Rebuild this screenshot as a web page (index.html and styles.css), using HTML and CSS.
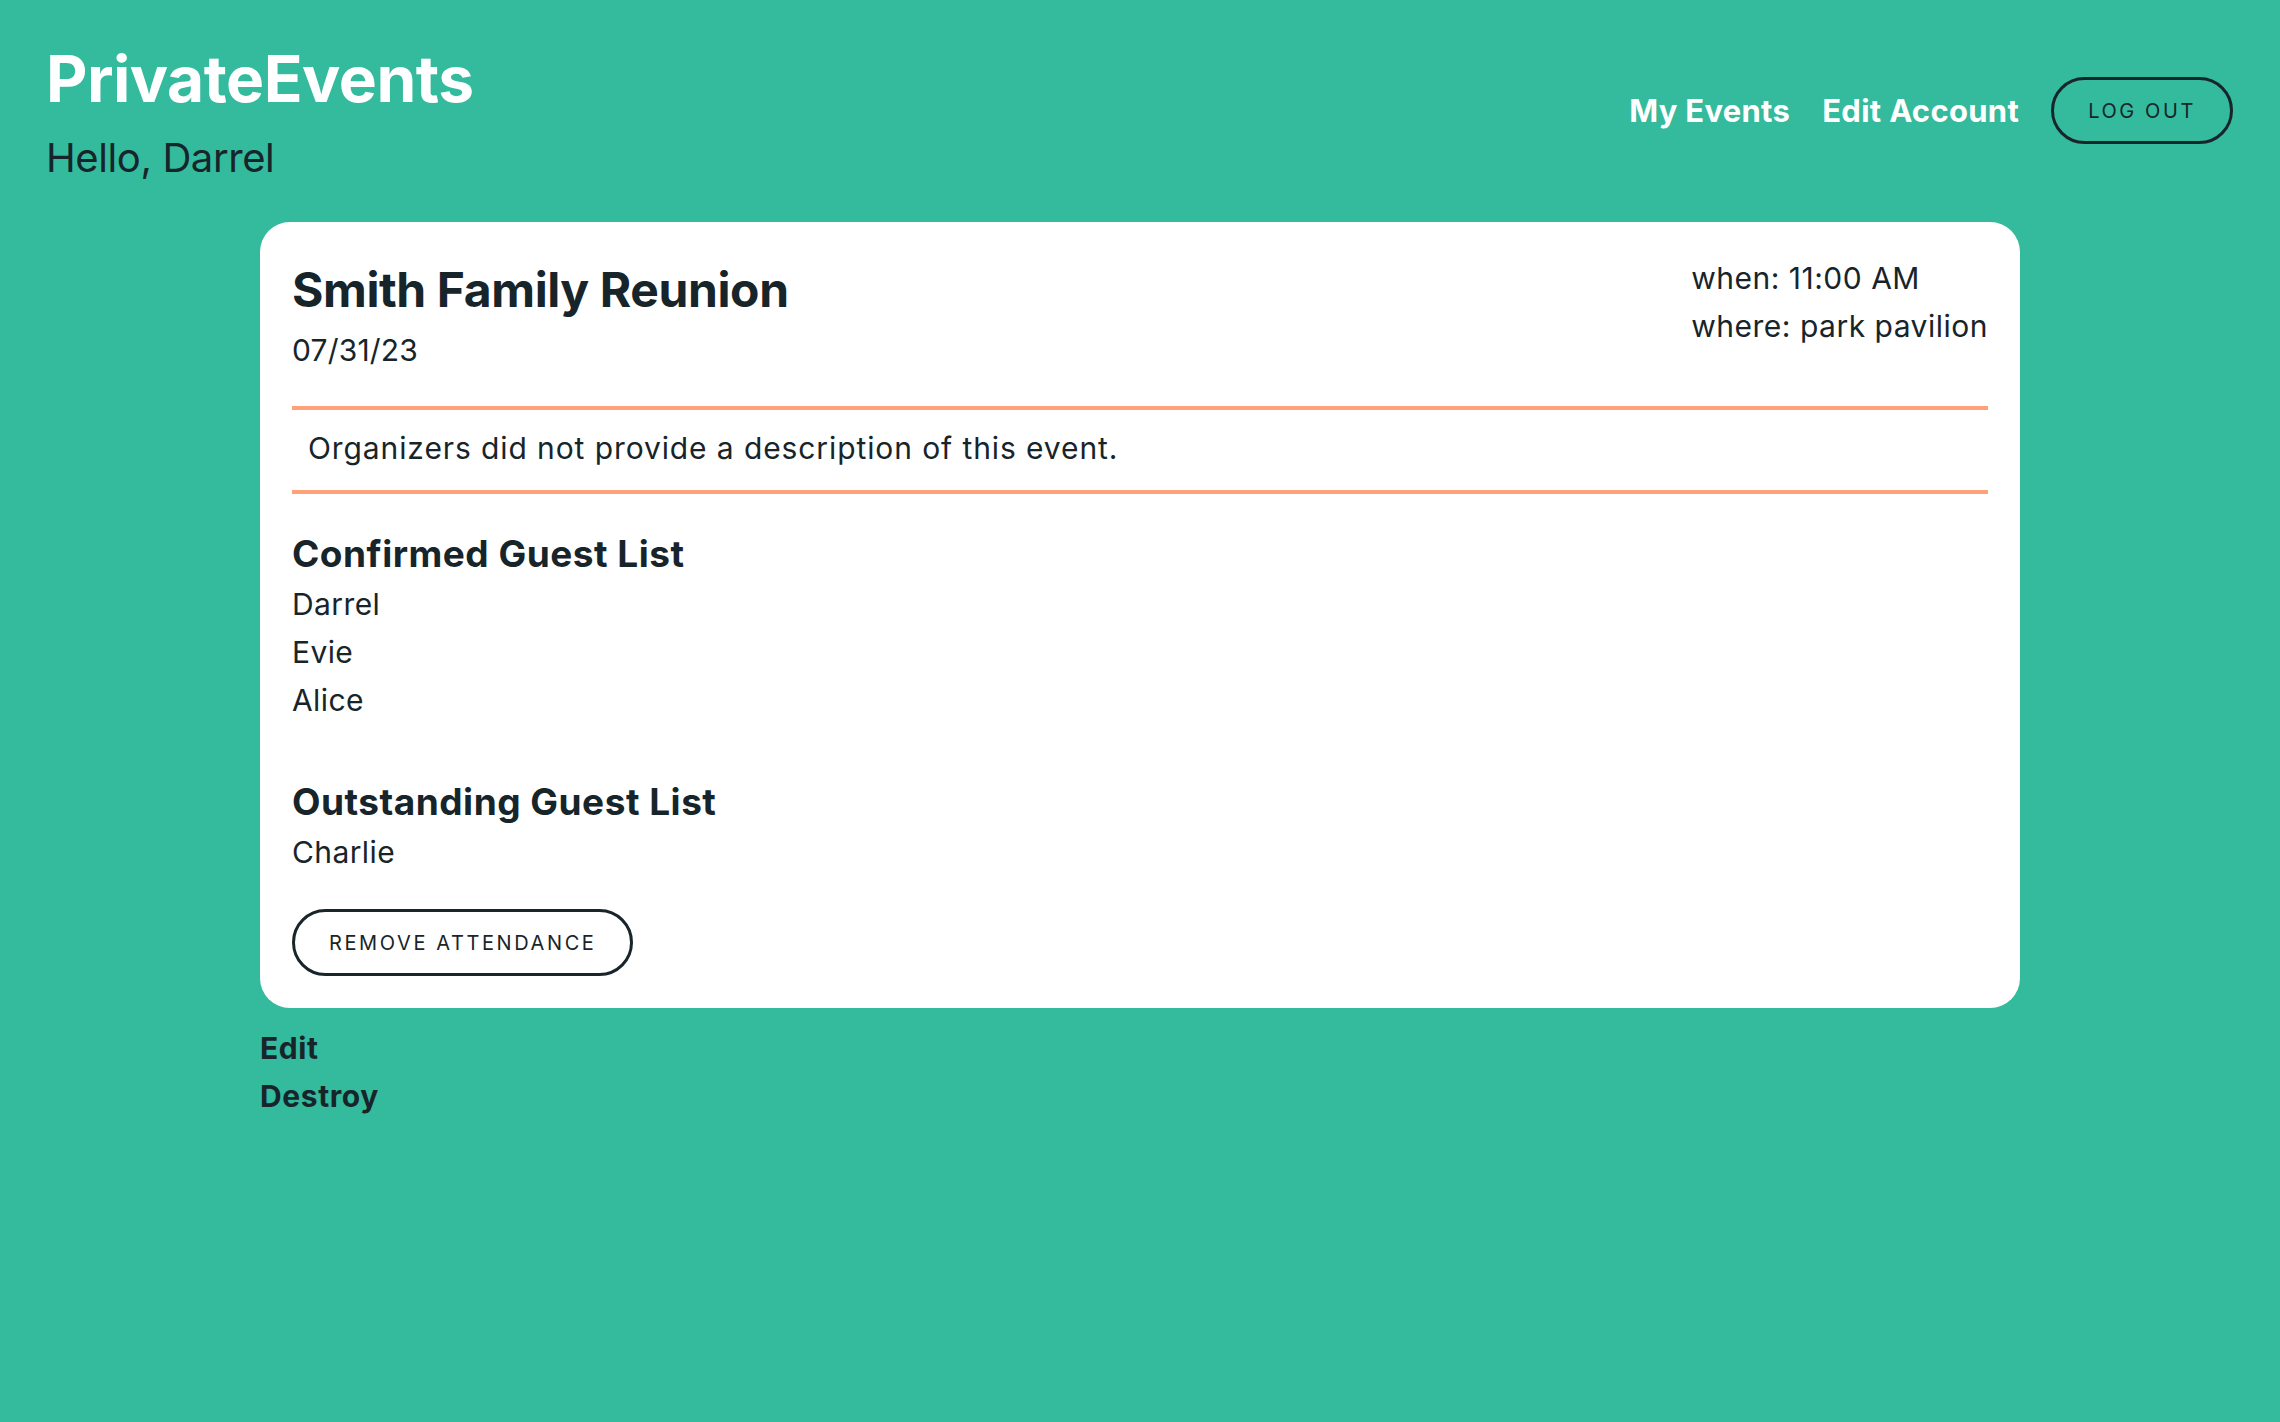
FILE: index.html
```html
<!DOCTYPE html>
<html lang="en">
<head>
<meta charset="utf-8">
<title>PrivateEvents</title>
<link rel="stylesheet" href="styles.css">
</head>
<body>
<header class="site-header">
  <div class="brand">
    <h1 class="brand-title">PrivateEvents</h1>
    <p class="greeting">Hello, Darrel</p>
  </div>
  <nav class="nav">
    <a class="nav-link" href="#">My Events</a>
    <a class="nav-link" href="#">Edit Account</a>
    <button class="pill-btn" type="button">Log out</button>
  </nav>
</header>

<main class="main">
  <article class="card">
    <div class="card-head">
      <div class="card-head-left">
        <h2 class="event-title">Smith Family Reunion</h2>
        <p class="event-date">07/31/23</p>
      </div>
      <div class="card-head-right">
        <p class="meta">when: 11:00 AM</p>
        <p class="meta">where: park pavilion</p>
      </div>
    </div>

    <div class="description">
      <p>Organizers did not provide a description of this event.</p>
    </div>

    <section class="guests">
      <h3 class="guests-title">Confirmed Guest List</h3>
      <ul class="guest-list">
        <li>Darrel</li>
        <li>Evie</li>
        <li>Alice</li>
      </ul>
    </section>

    <section class="guests guests-outstanding">
      <h3 class="guests-title">Outstanding Guest List</h3>
      <ul class="guest-list">
        <li>Charlie</li>
      </ul>
    </section>

    <button class="pill-btn pill-btn-card" type="button">Remove attendance</button>
  </article>

  <div class="actions">
    <a class="action-link" href="#">Edit</a>
    <a class="action-link" href="#">Destroy</a>
  </div>
</main>
</body>
</html>
```

FILE: styles.css
```css
* {
  box-sizing: border-box;
}

html, body {
  margin: 0;
  padding: 0;
}

body {
  background: #34ba9c;
  color: #17252b;
  font-family: "Inter", "DejaVu Sans", sans-serif;
  min-height: 1422px;
}

.site-header {
  display: flex;
  justify-content: space-between;
  align-items: flex-start;
  padding: 40px 47px 0 46px;
}

.brand-title {
  margin: 0;
  font-size: 64px;
  line-height: 78px;
  font-weight: 700;
  color: #ffffff;
  letter-spacing: -0.5px;
}

.greeting {
  margin: 16px 0 0;
  font-size: 40px;
  line-height: 48px;
  font-weight: 400;
  color: #17252b;
  letter-spacing: -0.4px;
}

.nav {
  display: flex;
  align-items: center;
  gap: 32px;
  margin-top: 37px;
}

.nav-link {
  color: #ffffff;
  font-size: 31px;
  font-weight: 700;
  text-decoration: none;
  letter-spacing: 0.3px;
}

.pill-btn {
  height: 67px;
  padding: 0 34px;
  border: 3.5px solid #18252b;
  border-radius: 34px;
  background: transparent;
  color: #18252b;
  font-family: "Inter", "DejaVu Sans", sans-serif;
  font-size: 20px;
  font-weight: 400;
  letter-spacing: 2.6px;
  text-transform: uppercase;
  cursor: pointer;
}

.main {
  width: 1760px;
  margin: 40px auto 0;
}

.card {
  background: #ffffff;
  border-radius: 30px;
  padding: 32px 32px 32px;
}

.card-head {
  display: flex;
  justify-content: space-between;
  align-items: flex-start;
}

.event-title {
  margin: 0;
  font-size: 48px;
  line-height: 72px;
  font-weight: 700;
  letter-spacing: -0.4px;
}

.event-date {
  margin: 0;
  font-size: 30px;
  line-height: 48px;
  letter-spacing: 0.2px;
}

.meta {
  margin: 0;
  font-size: 30px;
  line-height: 48px;
  letter-spacing: 0.5px;
}

.description {
  margin-top: 32px;
  border-top: 4px solid #ffa27a;
  border-bottom: 4px solid #ffa27a;
  padding: 14px 16px 18px;
}

.description p {
  margin: 0;
  font-size: 30px;
  line-height: 48px;
  letter-spacing: 0.9px;
}

.guests {
  margin-top: 34px;
}

.guests-outstanding {
  margin-top: 52px;
}

.guests-title {
  margin: 0;
  font-size: 37px;
  line-height: 52px;
  font-weight: 700;
  letter-spacing: 0.5px;
}

.guest-list {
  list-style: none;
  margin: 0;
  padding: 0;
}

.guest-list li {
  font-size: 30px;
  line-height: 48px;
  letter-spacing: 0.4px;
}

.pill-btn-card {
  margin-top: 33px;
  padding: 0 34px;
  display: block;
}

.actions {
  display: flex;
  flex-direction: column;
  align-items: flex-start;
  margin-top: 16px;
}

.action-link {
  color: #17252b;
  font-size: 30px;
  line-height: 48px;
  font-weight: 700;
  text-decoration: none;
  letter-spacing: 0.6px;
}
```
